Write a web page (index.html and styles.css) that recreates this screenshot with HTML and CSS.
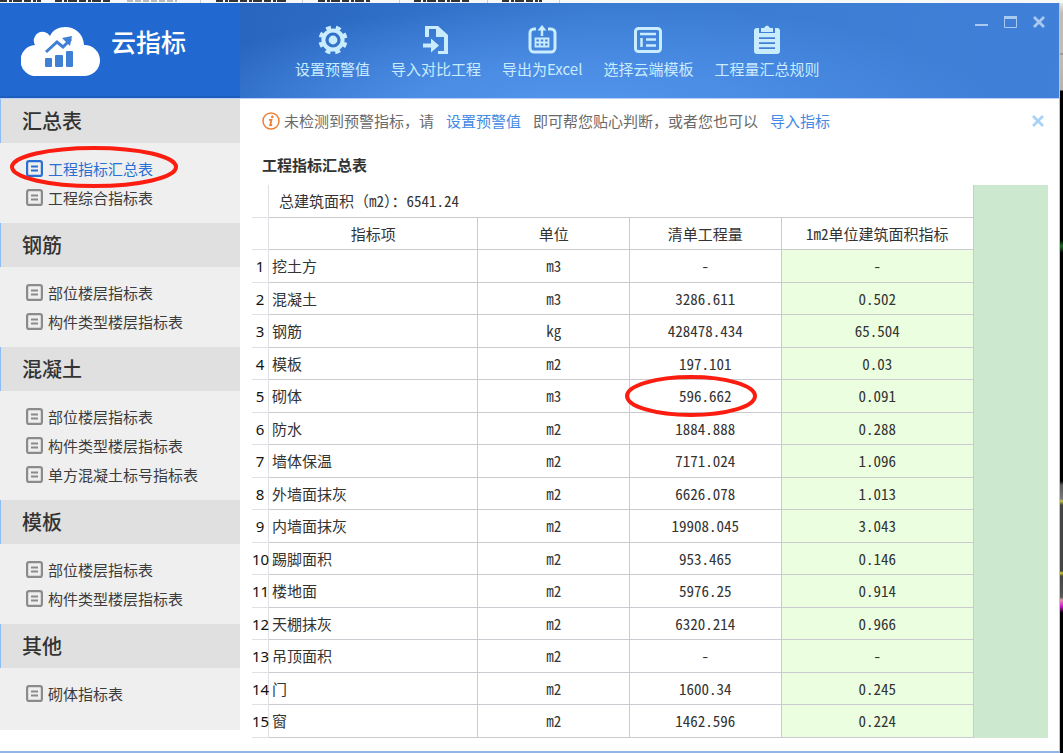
FILE: index.html
```html
<!DOCTYPE html>
<html lang="zh-CN">
<head>
<meta charset="utf-8">
<title>云指标</title>
<link rel="stylesheet" href="styles.css">
</head>
<body>
<svg class="defs" aria-hidden="true">
  <symbol id="doc" viewBox="0 0 17 17"><rect x="1.100" y="1.100" width="14.800" height="14.800" rx="2" fill="none" stroke="currentColor" stroke-width="2.200"/><path d="M5 6.500h7M5 10.500h7" stroke="currentColor" stroke-width="1.900"/></symbol>
  <symbol id="cross" viewBox="0 0 12 12"><path d="M1 1l10 10M11 1L1 11" stroke="currentColor" stroke-width="2.800"/></symbol>
</svg>
<div class="desktop">
  <div class="backdrop-top" aria-hidden="true">
    <svg width="560" height="3"><path d="M0 1h41M55 1h56M216 1h72M318 1h52M414 1h56M502 1h40" stroke="#333" stroke-width="2" stroke-dasharray="7 2 3 1 9 2"/><path d="M127 1h50" stroke="#bbb" stroke-width="2" stroke-dasharray="6 2"/><path d="M200.500 0v3M302.500 0v3M399.500 0v3M487.500 0v3M559.500 0v3" stroke="#ccc"/></svg>
  </div>
  <div class="window">
    <header class="header">
      <div class="brand">
        <svg width="80" height="53" viewBox="0 0 80 53"><path d="M16 52A15.500 15.500 0 0 1 14 21A8.500 8.500 0 0 1 29 12C35-2 62 0 63 21A15.500 15.500 0 0 1 64 52z" fill="#fff"/><path d="M25 28l11-10 6 5 8-8" fill="none" stroke="#3f80d6" stroke-width="3"/><path d="M41 14l10-2-2 10z" fill="#3f80d6"/><rect x="24" y="34" width="7" height="9" rx="1" fill="#3f80d6"/><rect x="34" y="31" width="8" height="12" rx="1" fill="#3f80d6"/><rect x="45" y="27" width="7" height="16" rx="1" fill="#3f80d6"/></svg>
        <span class="brand-name">云指标</span>
      </div>
      <nav class="toolbar">
        <button class="tool"><svg width="30" height="30" viewBox="0 0 30 30"><circle cx="15" cy="15" r="9.600" fill="none" stroke="currentColor" stroke-width="4"/><circle cx="15" cy="15" r="4.400" fill="currentColor"/><circle cx="15" cy="15" r="12.500" fill="none" stroke="currentColor" stroke-width="4" stroke-dasharray="4.909 4.909" stroke-dashoffset="-2.450"/></svg><span>设置预警值</span></button>
        <button class="tool"><svg width="30" height="30" viewBox="0 0 30 30"><path d="M4 12V1h13l10 9v19H17v-3h6V12h-8V4H8v8z" fill="currentColor"/><path d="M2 18.500h8v-5l8 7-8 7v-5H2z" fill="currentColor"/></svg><span>导入对比工程</span></button>
        <button class="tool"><svg width="30" height="30" viewBox="0 0 30 30"><path d="M9 4H7a4 4 0 0 0-4 4v15a4 4 0 0 0 4 4h17a4 4 0 0 0 4-4V8a4 4 0 0 0-4-4h-3" fill="none" stroke="currentColor" stroke-width="3"/><path d="M15 11V4" stroke="currentColor" stroke-width="2.400"/><path d="M10.500 5.500L15 0l4.500 5.500z" fill="currentColor"/><path d="M8.500 13.500h13v8h-13zM8.500 17.500h13M12.800 13.500v8M17.200 13.500v8" fill="none" stroke="currentColor" stroke-width="1.800"/></svg><span>导出为Excel</span></button>
        <button class="tool"><svg width="30" height="30" viewBox="0 0 30 30"><rect x="2.500" y="3.500" width="25" height="23" rx="3" fill="none" stroke="currentColor" stroke-width="3"/><path d="M7 9h16M13 14.500h10M13 20.500h10M8.500 13v9" fill="none" stroke="currentColor" stroke-width="2.500"/></svg><span>选择云端模板</span></button>
        <button class="tool"><svg width="30" height="30" viewBox="0 0 30 30"><path d="M5 3h2v5h16V3h2q3 0 3 3v20q0 3-3 3H5q-3 0-3-3V6q0-3 3-3z" fill="currentColor"/><path d="M9 7V3h3q3-5 6 0h3v4z" fill="currentColor"/><path d="M7 13.200h16M7 18.200h16M7 23.200h16" stroke="#4280d8" stroke-width="1.700"/></svg><span>工程量汇总规则</span></button>
      </nav>
      <div class="controls">
        <button aria-label="最小化"><svg width="13" height="12" viewBox="0 0 13 12"><path d="M0 9h13" stroke="currentColor" stroke-width="2"/></svg></button>
        <button aria-label="最大化"><svg width="13" height="12" viewBox="0 0 13 12"><path d="M.5 .5h12v11H.5z" fill="none" stroke="currentColor"/><path d="M0 1.500h13" stroke="currentColor" stroke-width="3"/></svg></button>
        <button aria-label="关闭"><svg width="12" height="12"><use href="#cross"/></svg></button>
      </div>
    </header>
    <div class="content">
      <aside class="sidebar">
        <h2>汇总表</h2>
        <ul>
          <li><a class="active" href="#"><svg><use href="#doc"/></svg>工程指标汇总表</a><svg class="ring ring-nav" viewBox="0 0 168 42" preserveAspectRatio="none"><ellipse cx="84" cy="21" rx="82" ry="19"/></svg></li>
          <li><a href="#"><svg><use href="#doc"/></svg>工程综合指标表</a></li>
        </ul>
        <h2>钢筋</h2>
        <ul>
          <li><a href="#"><svg><use href="#doc"/></svg>部位楼层指标表</a></li>
          <li><a href="#"><svg><use href="#doc"/></svg>构件类型楼层指标表</a></li>
        </ul>
        <h2>混凝土</h2>
        <ul>
          <li><a href="#"><svg><use href="#doc"/></svg>部位楼层指标表</a></li>
          <li><a href="#"><svg><use href="#doc"/></svg>构件类型楼层指标表</a></li>
          <li><a href="#"><svg><use href="#doc"/></svg>单方混凝土标号指标表</a></li>
        </ul>
        <h2>模板</h2>
        <ul>
          <li><a href="#"><svg><use href="#doc"/></svg>部位楼层指标表</a></li>
          <li><a href="#"><svg><use href="#doc"/></svg>构件类型楼层指标表</a></li>
        </ul>
        <h2>其他</h2>
        <ul>
          <li><a href="#"><svg><use href="#doc"/></svg>砌体指标表</a></li>
        </ul>
      </aside>
      <main class="main">
        <div class="notice">
          <svg class="info" width="18" height="18" viewBox="0 0 18 18"><circle cx="9" cy="9" r="8" fill="none" stroke="#ec8137" stroke-width="1.500"/><circle cx="10.300" cy="4.900" r="1.300" fill="#ec8137"/><path d="M7 7.800h2.500L8.200 13h2" fill="none" stroke="#ec8137" stroke-width="1.800"/></svg>
          <span>未检测到预警指标，请</span>
          <a href="#">设置预警值</a>
          <span>即可帮您贴心判断，或者您也可以</span>
          <a href="#">导入指标</a>
          <button class="dismiss" aria-label="关闭提示"><svg width="12" height="12"><use href="#cross"/></svg></button>
        </div>
        <h1>工程指标汇总表</h1>
        <div class="sheet">
          <table>
            <colgroup><col class="c-num"><col class="c-name"><col class="c-unit"><col class="c-qty"><col class="c-per"></colgroup>
            <thead>
              <tr><td></td><td class="area" colspan="4">总建筑面积（<span class="half">m2</span>）：<span class="half">6541.24</span></td></tr>
              <tr><td></td><th scope="col">指标项</th><th scope="col">单位</th><th scope="col">清单工程量</th><th scope="col">1m2单位建筑面积指标</th></tr>
            </thead>
            <tbody>
              <tr><th scope="row">1</th><td>挖土方</td><td>m3</td><td>-</td><td>-</td></tr>
              <tr><th scope="row">2</th><td>混凝土</td><td>m3</td><td>3286.611</td><td>0.502</td></tr>
              <tr><th scope="row">3</th><td>钢筋</td><td>kg</td><td>428478.434</td><td>65.504</td></tr>
              <tr><th scope="row">4</th><td>模板</td><td>m2</td><td>197.101</td><td>0.03</td></tr>
              <tr><th scope="row">5</th><td>砌体</td><td>m3</td><td class="marked">596.662<svg class="ring ring-cell" viewBox="0 0 132 42" preserveAspectRatio="none"><ellipse cx="66" cy="21" rx="64" ry="19"/></svg></td><td>0.091</td></tr>
              <tr><th scope="row">6</th><td>防水</td><td>m2</td><td>1884.888</td><td>0.288</td></tr>
              <tr><th scope="row">7</th><td>墙体保温</td><td>m2</td><td>7171.024</td><td>1.096</td></tr>
              <tr><th scope="row">8</th><td>外墙面抹灰</td><td>m2</td><td>6626.078</td><td>1.013</td></tr>
              <tr><th scope="row">9</th><td>内墙面抹灰</td><td>m2</td><td>19908.045</td><td>3.043</td></tr>
              <tr><th scope="row">10</th><td>踢脚面积</td><td>m2</td><td>953.465</td><td>0.146</td></tr>
              <tr><th scope="row">11</th><td>楼地面</td><td>m2</td><td>5976.25</td><td>0.914</td></tr>
              <tr><th scope="row">12</th><td>天棚抹灰</td><td>m2</td><td>6320.214</td><td>0.966</td></tr>
              <tr><th scope="row">13</th><td>吊顶面积</td><td>m2</td><td>-</td><td>-</td></tr>
              <tr><th scope="row">14</th><td>门</td><td>m2</td><td>1600.34</td><td>0.245</td></tr>
              <tr><th scope="row">15</th><td>窗</td><td>m2</td><td>1462.596</td><td>0.224</td></tr>
            </tbody>
          </table>
          <div class="filler"></div>
        </div>
      </main>
    </div>
  </div>
  <div class="backdrop-side" aria-hidden="true"></div>
</div>
</body>
</html>
```
FILE: styles.css
```css
* { box-sizing: border-box; }
body {
  margin: 0;
  font: 15px/20px "Noto Sans CJK SC", sans-serif;
  color: #3c3c3c;
}
button { border: 0; padding: 0; background: none; font: inherit; color: inherit; cursor: pointer; }
a { color: inherit; text-decoration: none; }
h1, h2, ul { margin: 0; padding: 0; }
svg { display: block; flex: none; }
.defs { position: absolute; width: 0; height: 0; }

.desktop {
  display: grid;
  grid-template: 3px 1fr / 1fr 3px;
  min-height: 100vh;
}
.backdrop-top { grid-column: 1 / 3; background: #f7f8fa; overflow: hidden; }
.backdrop-side {
  background: linear-gradient(#e8e8e8 0, #c0bebb 10px, #c0bebb 50px, #777 51px, #c0bebb 52px, #b5b3b0 87px, #000 88px, #000 237px, #1d6b25 243px, #000 250px, #000 478px, #5a5a5a 482px, #777 496px, #c8c840 498px, #444 502px, #444 568px, #d5cf20 570px, #444 573px, #555 594px, #d9a 597px, #d61bd0 603px, #000 610px);
}

.window {
  display: flex;
  flex-direction: column;
  border-right: 1px solid #a9c9f4;
  border-bottom: 2px solid #92b4e6;
  background: #fff;
}
.header {
  display: flex;
  height: 96px;
  background: radial-gradient(40% 110% at 55% 110%, #5296ec 0, #4b8ce4 40%, rgba(66, 130, 218, 0) 100%), linear-gradient(100deg, #2765be 22%, #3a7bd2 55%, #4080d8 100%);
  border-bottom: 1px solid #b9d1f3;
}
.brand {
  display: flex;
  align-items: flex-start;
  gap: 10px;
  width: 240px;
  padding: 21px 0 0 21px;
  background: #2169d1;
  border-bottom: 2px solid #1d5dbc;
}
.brand-name { color: #fff; font-size: 25px; line-height: 34px; font-weight: 500; }
.toolbar { display: flex; align-items: flex-start; gap: 21px; padding: 22px 0 0 55px; }
.tool {
  display: flex;
  flex-direction: column;
  align-items: center;
  gap: 4px;
  color: #c9ecff;
  white-space: nowrap;
}
.controls { display: flex; align-items: flex-start; gap: 16px; margin-left: auto; padding: 13px 14px 0 0; color: #a9c9f2; }

.content { display: flex; flex: 1; }
.sidebar { flex: none; align-self: flex-start; width: 240px; background: #efefef; padding-bottom: 11px; }
.sidebar h2 {
  padding-left: 21px;
  border-left: 1px solid #8dbbf5;
  background: #e0e0e0;
  font-size: 20px;
  line-height: 44px;
  font-weight: 500;
  color: #333;
}
.sidebar ul { padding: 11px 0; list-style: none; }
.sidebar li { position: relative; }
.sidebar a { display: flex; align-items: center; gap: 5px; padding-left: 26px; line-height: 29px; }
.sidebar a svg { width: 17px; height: 17px; color: #8b8b8b; }
.sidebar .active, .sidebar .active svg { color: #2a6fd3; }

.ring { position: absolute; overflow: visible; pointer-events: none; }
.ring ellipse { fill: none; stroke: #fb1d10; stroke-width: 4; }
.ring-nav { left: 10px; top: -8px; width: 168px; height: 42px; }
.ring-cell { left: 50%; top: 50%; width: 132px; height: 42px; margin: -21px 0 0 -80px; }

.main { flex: 1; min-width: 0; padding: 12px 11px 13px 12px; }
.notice { display: flex; align-items: center; gap: 12px; padding-left: 10px; color: #6a6a6a; white-space: nowrap; }
.notice a { color: #4489e4; }
.info { margin-right: -8px; }
.dismiss { margin-left: auto; padding-right: 4px; color: #a9d2f7; }
.main h1 { padding: 24px 0 10px 10px; font-size: 15px; line-height: 20px; font-weight: 700; color: #333; }

.sheet { display: flex; }
.filler { flex: none; width: 74px; background: #cce8cf; }
table { flex: 1; width: 100%; table-layout: fixed; border-collapse: separate; border-spacing: 0; color: #333; }
.c-num { width: 17px; }
.c-name { width: 29%; }
.c-unit, .c-qty { width: 21%; }
tr { height: 33px; }
tr:nth-child(even) { height: 32px; }
th, td {
  padding: 0;
  border-right: 1px solid #c9cbd0;
  border-bottom: 1px solid #c9cbd0;
  font-weight: 400;
  text-align: center;
  white-space: nowrap;
  font-feature-settings: "hwid";
}
tr > :first-child { border-right-color: #dfe1e4; border-bottom-color: #dfe1e4; font-feature-settings: normal; }
tbody th { color: #111; font-family: "Noto Sans", sans-serif; }
tbody td:nth-child(2) { padding-left: 3px; text-align: left; }
tbody td:last-child { background: #ebffe0; }
.area { padding-left: 10px; text-align: left; font-feature-settings: normal; }
.half { font-feature-settings: "hwid"; }
.marked { position: relative; }
```
